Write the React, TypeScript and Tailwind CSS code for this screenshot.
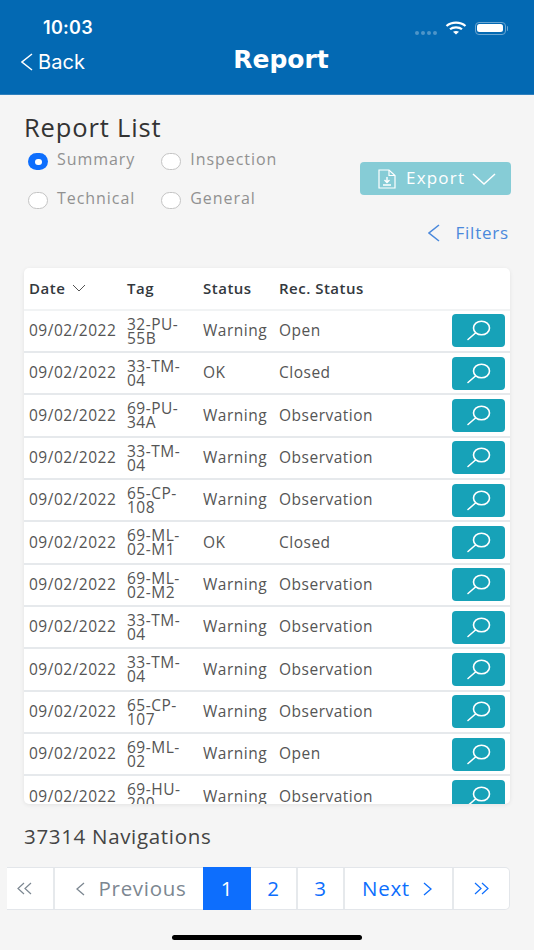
import React from "react";

const rows = [
  ["32-PU-", "55B", "Warning", "Open"],
  ["33-TM-", "04", "OK", "Closed"],
  ["69-PU-", "34A", "Warning", "Observation"],
  ["33-TM-", "04", "Warning", "Observation"],
  ["65-CP-", "108", "Warning", "Observation"],
  ["69-ML-", "02-M1", "OK", "Closed"],
  ["69-ML-", "02-M2", "Warning", "Observation"],
  ["33-TM-", "04", "Warning", "Observation"],
  ["33-TM-", "04", "Warning", "Observation"],
  ["65-CP-", "107", "Warning", "Observation"],
  ["69-ML-", "02", "Warning", "Open"],
  ["69-HU-", "200", "Warning", "Observation"],
];

function Chevron({ dir, className, w = 12, h = 18, sw = 1.6 }: { dir: "left" | "right" | "down"; className?: string; w?: number; h?: number; sw?: number }) {
  const d =
    dir === "left"
      ? `M${w - 1} 1 L1 ${h / 2} L${w - 1} ${h - 1}`
      : dir === "right"
      ? `M1 1 L${w - 1} ${h / 2} L1 ${h - 1}`
      : `M1 1 L${w / 2} ${h - 1} L${w - 1} 1`;
  return (
    <svg width={w} height={h} viewBox={`0 0 ${w} ${h}`} fill="none" stroke="currentColor" strokeWidth={sw} className={className}>
      <path d={d} />
    </svg>
  );
}

function Double({ dir, className }: { dir: "left" | "right"; className?: string }) {
  return (
    <svg width="15" height="13" viewBox="0 0 15 13" fill="none" stroke="currentColor" strokeWidth="1.2" className={className}>
      {dir === "left" ? <path d="M7 1 L1 6.5 L7 12 M14 1 L8 6.5 L14 12" /> : <path d="M1 1 L7 6.5 L1 12 M8 1 L14 6.5 L8 12" />}
    </svg>
  );
}

function SearchIcon() {
  return (
    <svg width="25" height="21" viewBox="0 0 25 21" fill="none" stroke="white" strokeWidth="1.6">
      <ellipse cx="15.5" cy="8" rx="8" ry="6.8" />
      <path d="M9.5 13 L2 19.5" strokeLinecap="round" />
    </svg>
  );
}

function Radio({ on, label, gap }: { on?: boolean; label: string; gap: string }) {
  return (
    <div className={`flex items-start ${gap}`}>
      <span className={on ? "mt-[4px] w-[20px] h-[17px] rounded-full bg-[#0d6efd] flex items-center justify-center" : "mt-[4px] w-[20px] h-[17px] rounded-full bg-white border border-[#c4c4c4]"}>
        {on && <span className="w-[7px] h-[6px] rounded-full bg-white" />}
      </span>
      <span className="text-[16px] leading-[20px] tracking-[0.95px] text-[#919191]">{label}</span>
    </div>
  );
}

export default function App() {
  return (
    <div className="w-[534px] h-[950px] overflow-hidden bg-[#f5f5f5] flex flex-col" style={{ fontFamily: '"Open Sans", sans-serif' }}>
      <header className="h-[95px] shrink-0 bg-[#0369b3] text-white relative border-b border-[#2f80bd]">
        <div className="flex items-center justify-between pt-[16px] pl-[43px] pr-[26px] h-[40px]">
          <span className="text-[18px] leading-[24px] font-semibold tracking-[0.3px]" style={{ fontFamily: "Inter, sans-serif" }}>10:03</span>
          <div className="flex items-center">
            <div className="flex gap-[2px] mr-[8px] mt-[9px]">
              <span className="w-[4px] h-[4px] rounded-full bg-[#4e95c9]" />
              <span className="w-[4px] h-[4px] rounded-full bg-[#4e95c9]" />
              <span className="w-[4px] h-[4px] rounded-full bg-[#4e95c9]" />
              <span className="w-[4px] h-[4px] rounded-full bg-[#4e95c9]" />
            </div>
            <svg width="22" height="14" viewBox="0 0 22 14" fill="none" stroke="white" strokeWidth="2.2" className="mr-[8px]">
              <path d="M1.5 5 C6.5 0.5 15.5 0.5 20.5 5" />
              <path d="M5 8.3 C8 5.6 14 5.6 17 8.3" />
              <path d="M11 13.5 L8 10.8 C9.5 9.6 12.5 9.6 14 10.8 Z" fill="white" stroke="none" />
            </svg>
            <div className="flex items-center">
              <div className="w-[31px] h-[13px] rounded-[4px] border border-[#6ba6d2] p-[1.5px]">
                <div className="w-full h-full rounded-[2.5px] bg-white" />
              </div>
              <span className="w-[1.5px] h-[5px] bg-[#6ba6d2] ml-[1px] rounded-r" />
            </div>
          </div>
        </div>
        <div className="absolute left-[21px] top-[51px] flex items-center gap-[5px]">
          <Chevron dir="left" w={12} h={18} sw={1.5} />
          <span className="text-[20px] leading-[22px] tracking-[0.1px]" style={{ fontFamily: "Inter, sans-serif" }}>Back</span>
        </div>
        <div className="absolute left-[28px] right-0 top-[44px] text-center text-[25px] leading-[32px] font-bold" style={{ fontFamily: '"DejaVu Sans", sans-serif' }}>Report</div>
      </header>

      <main className="flex-1 flex flex-col">
        <div className="pl-[24px] pr-[23px] pt-[15px] h-[173px] shrink-0">
          <h1 className="text-[25.5px] leading-[34px] tracking-[0.85px] text-[#333333]">Report List</h1>
          <div className="flex justify-between">
            <div className="pl-[4px] pt-[5px] flex flex-col gap-[18px]">
              <div className="flex gap-[26px]">
                <Radio on label="Summary" gap="gap-[9px]" />
                <Radio label="Inspection" gap="gap-[9px]" />
              </div>
              <div className="flex gap-[26px]">
                <Radio label="Technical" gap="gap-[9px]" />
                <Radio label="General" gap="gap-[9px]" />
              </div>
            </div>
            <div className="flex flex-col items-end pt-[17px]">
              <div className="w-[151px] h-[33px] mt-[1px] rounded-[4px] bg-[#86ccd6] text-white flex items-center pl-[17px]">
                <svg width="20" height="20" viewBox="0 0 20 20" fill="none" stroke="white" strokeWidth="1.2">
                  <path d="M2 1 H12 L18 6.5 V19 H2 Z" />
                  <path d="M12 1 V6.5 H18" />
                  <path d="M10 8 V13 M7.5 11 L10 13.5 L12.5 11 M6 16 H14" strokeWidth="1.4" />
                </svg>
                <span className="ml-[9px] -mt-[2px] text-[17px] leading-[22px] tracking-[1.2px]">Export</span>
                <Chevron dir="down" w={24} h={12} sw={1.5} className="ml-[7px]" />
              </div>
              <div className="mt-[27px] mr-[2px] flex items-center text-[#4b89dc]">
                <Chevron dir="left" w={12} h={18} sw={1.6} />
                <span className="ml-[15px] text-[17px] leading-[22px] tracking-[0.8px]">Filters</span>
              </div>
            </div>
          </div>
        </div>

        <div className="mx-[24px] h-[536px] shrink-0 rounded-[5px] bg-white overflow-hidden shadow-[0_1px_4px_rgba(0,0,0,0.08)]">
          <div className="grid grid-cols-[98px_76px_76px_1fr] h-[42.5px] items-center pl-[5px] text-[#33383d] text-[15px] font-semibold tracking-[0.5px] border-b-2 border-[#f1f3f4]">
            <div className="flex items-center gap-[7px]">
              Date
              <Chevron dir="down" w={14} h={8} sw={1} className="text-[#555555]" />
            </div>
            <div>Tag</div>
            <div>Status</div>
            <div>Rec. Status</div>
          </div>
          {rows.map((r, i) => (
            <div key={i} className="h-[42.35px] shrink-0 grid grid-cols-[98px_76px_76px_1fr_53px] items-center pl-[5px] pr-[5px] text-[15.5px] tracking-[0.5px] text-[#555555] border-b-2 border-[#e6e9ec]">
              <div>09/02/2022</div>
              <div className="leading-[14px]">
                {r[0]}
                <br />
                {r[1]}
              </div>
              <div>{r[2]}</div>
              <div>{r[3]}</div>
              <div className="w-[53px] h-[33px] rounded-[4px] bg-[#17a2b8] flex items-center justify-center">
                <SearchIcon />
              </div>
            </div>
          ))}
        </div>

        <div className="pl-[24px] pt-[19px] h-[63px] shrink-0 text-[20.5px] leading-[26px] tracking-[0.68px] text-[#444444]">37314 Navigations</div>

        <nav className="ml-[7px] w-[503px] h-[43px] shrink-0 flex rounded-r-[5px] bg-white border border-l-0 border-[#e3e6ea] text-[20.5px] tracking-[0.7px] text-[#0d6efd]">
          <div className="w-[48px] border-r-2 border-[#e6e9ec] flex items-center justify-center text-[#7c8791]">
            <Double dir="left" className="mr-[12px]" />
          </div>
          <div className="w-[148px] flex items-center justify-center gap-[14px] text-[#7c8791] pl-[4px]">
            <Chevron dir="left" w={9} h={14} sw={1.3} />
            <span>Previous</span>
          </div>
          <div className="w-[48px] -my-px bg-[#0d6efd] text-white flex items-center justify-center">1</div>
          <div className="w-[47px] border-r-2 border-[#e6e9ec] flex items-center justify-center">2</div>
          <div className="w-[47px] border-r-2 border-[#e6e9ec] flex items-center justify-center">3</div>
          <div className="w-[109px] border-r-2 border-[#e6e9ec] flex items-center justify-center gap-[13px] pr-[3px]">
            <span>Next</span>
            <Chevron dir="right" w={9} h={14} sw={1.3} />
          </div>
          <div className="flex-1 flex items-center justify-center">
            <Double dir="right" />
          </div>
        </nav>

        <div className="mt-[25px] self-center w-[190px] h-[5px] rounded-full bg-black" />
      </main>
    </div>
  );
}
